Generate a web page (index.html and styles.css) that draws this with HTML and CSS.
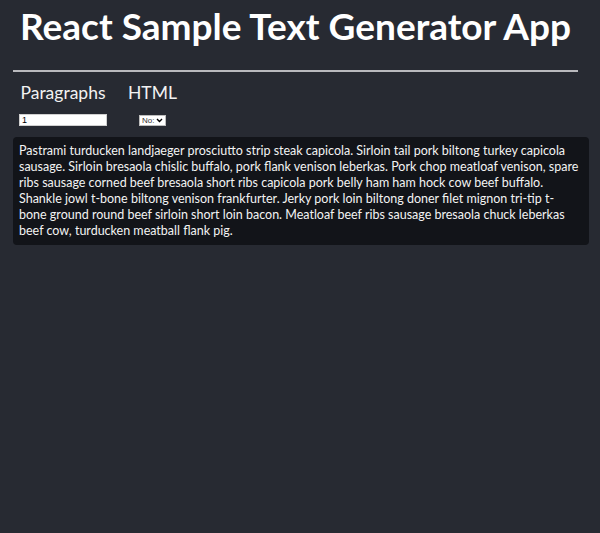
FILE: index.html
```html
<!DOCTYPE html>
<html lang="en">
<head>
<meta charset="utf-8">
<title>React Sample Text Generator App</title>
<link rel="stylesheet" href="styles.css">
</head>
<body>
<div class="app">
  <h1 class="title">React Sample Text Generator App</h1>
  <hr class="rule">
  <form class="controls">
    <div class="field">
      <label class="field-label" for="paras">Paragraphs</label>
      <input class="num-input" id="paras" type="text" value="1">
    </div>
    <div class="field">
      <label class="field-label">HTML</label>
      <div class="select">
        <span class="select-text">No:</span>
        <svg class="select-arrow" width="7" height="5" viewBox="0 0 7 5"><path d="M1 1 L3.5 3.5 L6 1" fill="none" stroke="#000" stroke-width="1.4"/></svg>
      </div>
    </div>
  </form>
  <div class="output">
    <p class="output-text">Pastrami turducken landjaeger prosciutto strip steak capicola. Sirloin tail pork biltong turkey capicola sausage. Sirloin bresaola chislic buffalo, pork flank venison leberkas. Pork chop meatloaf venison, spare ribs sausage corned beef bresaola short ribs capicola pork belly ham ham hock cow beef buffalo. Shankle jowl t-bone biltong venison frankfurter. Jerky pork loin biltong doner filet mignon tri-tip t-bone ground round beef sirloin short loin bacon. Meatloaf beef ribs sausage bresaola chuck leberkas beef cow, turducken meatball flank pig.</p>
  </div>
</div>
</body>
</html>
```
FILE: styles.css
```css
html, body {
  margin: 0;
  padding: 0;
  background: #272a32;
  height: 100%;
}
body {
  font-family: "Lato", "Noto Sans", sans-serif;
  color: #ffffff;
}
.app {
  padding: 0 11px 0 13px;
}
.title {
  margin: 4px 0 0 7px;
  font-size: 37px;
  line-height: 44px;
  font-weight: 700;
  color: #ffffff;
}
.rule {
  margin: 22px 11px 0 0;
  border: none;
  border-top: 2px solid #b9b9bd;
  height: 0;
}
.controls {
  display: flex;
  gap: 21px;
  padding-left: 6px;
  margin-top: 10px;
}
.field {
  display: flex;
  flex-direction: column;
  align-items: center;
}
.field-label {
  font-size: 17.5px;
  line-height: 21px;
  color: #f2f2f2;
}
.num-input {
  box-sizing: border-box;
  width: 88px;
  height: 12px;
  margin: 11px 0 0;
  padding: 0 2px;
  border: 1px solid #d0d0d0;
  background: #ffffff;
  font-family: "Liberation Sans", sans-serif;
  font-size: 9px;
  line-height: 10px;
  color: #000;
  outline: none;
}
.select {
  box-sizing: border-box;
  display: flex;
  align-items: center;
  gap: 2px;
  width: 27px;
  height: 11px;
  margin-top: 12px;
  padding: 0 2px 0 2px;
  background: #ffffff;
  border: 1px solid #bdbdbd;
}
.select-text {
  font-family: "Liberation Sans", sans-serif;
  font-size: 8px;
  line-height: 9px;
  color: #333333;
}
.select-arrow {
  display: block;
  flex: none;
}
.output {
  margin-top: 11px;
  background: #121419;
  border-radius: 4px;
  padding: 6px 10px 6px 6px;
}
.output-text {
  margin: 0;
  font-size: 12.5px;
  line-height: 16px;
  color: #f3f3f3;
}
```
